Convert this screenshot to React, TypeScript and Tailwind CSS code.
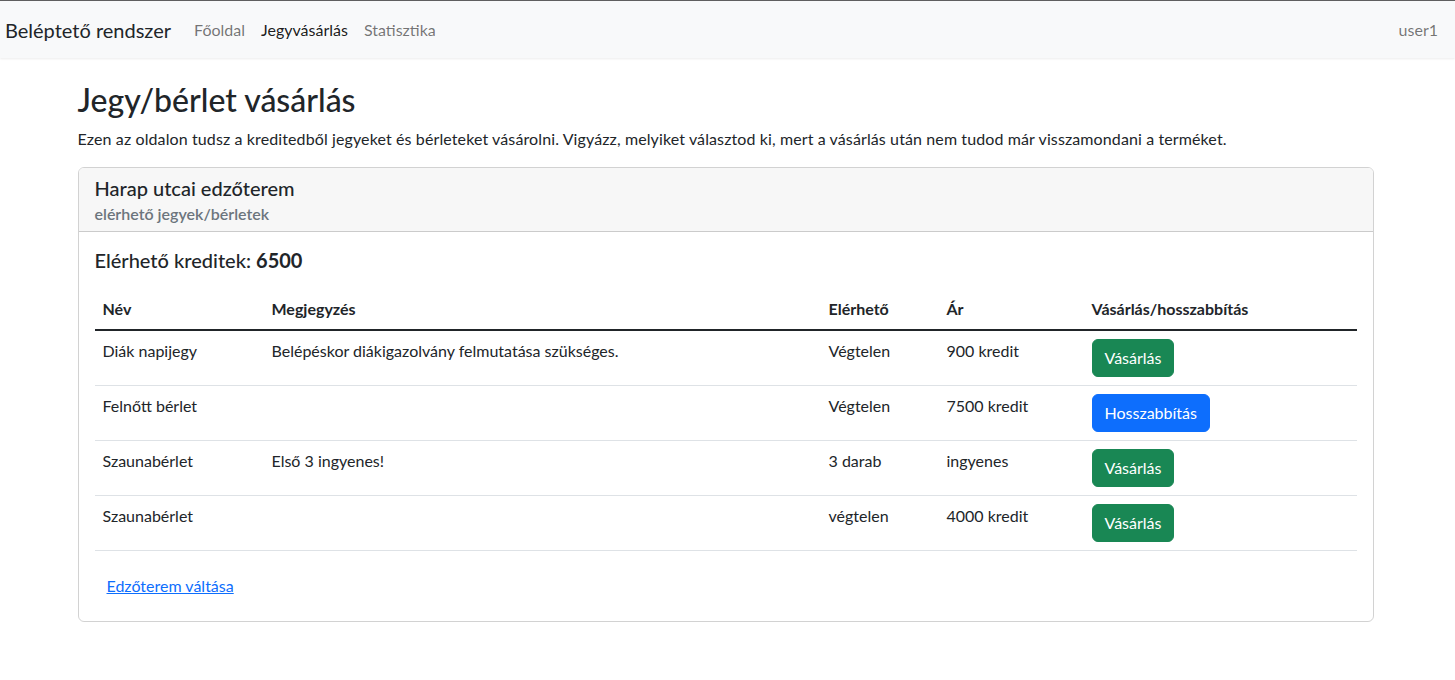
import React from "react";

const rows = [
  { name: "Diák napijegy", note: "Belépéskor diákigazolvány felmutatása szükséges.", avail: "Végtelen", price: "900 kredit", btn: "Vásárlás", kind: "green" },
  { name: "Felnőtt bérlet", note: "", avail: "Végtelen", price: "7500 kredit", btn: "Hosszabbítás", kind: "blue" },
  { name: "Szaunabérlet", note: "Első 3 ingyenes!", avail: "3 darab", price: "ingyenes", btn: "Vásárlás", kind: "green" },
  { name: "Szaunabérlet", note: "", avail: "végtelen", price: "4000 kredit", btn: "Vásárlás", kind: "green" },
];

export default function App() {
  return (
    <div className="min-h-[680px] bg-white text-[#212529] text-[16px] leading-6" style={{ fontFamily: "Lato, 'Noto Sans', sans-serif" }}>
      <nav className="h-[58px] border-t border-[#5f5f5f] bg-[#f8f9fa] shadow-[0_1px_2px_rgba(0,0,0,0.075)] flex items-center pl-[5px] pr-[17px]">
        <span className="text-[20px] leading-[30px] mr-[15px]">Beléptető rendszer</span>
        <div className="flex items-center">
          <span className="px-2 text-[rgba(0,0,0,0.55)]">Főoldal</span>
          <span className="px-2 text-[rgba(0,0,0,0.9)]">Jegyvásárlás</span>
          <span className="px-2 text-[rgba(0,0,0,0.55)]">Statisztika</span>
        </div>
        <span className="ml-auto text-[rgba(0,0,0,0.55)]">user1</span>
      </nav>

      <main className="mx-auto w-[1320px] pl-[10px] pr-[14px] pt-[23px]">
        <h2 className="text-[32px] leading-[38px] font-medium mb-2">Jegy/bérlet vásárlás</h2>
        <p className="mb-4 tracking-[0.007em]">Ezen az oldalon tudsz a kreditedből jegyeket és bérleteket vásárolni. Vigyázz, melyiket választod ki, mert a vásárlás után nem tudod már visszamondani a terméket.</p>

        <div className="border border-[rgba(0,0,0,0.175)] rounded-[6px] overflow-hidden">
          <div className="bg-[#f7f7f7] border-b border-[rgba(0,0,0,0.175)] px-4 py-2">
            <h5 className="text-[20px] leading-6 font-medium mb-1">Harap utcai edzőterem</h5>
            <h6 className="text-[16px] leading-[19px] font-semibold text-[#6c757d]">elérhető jegyek/bérletek</h6>
          </div>
          <div className="p-4">
            <h5 className="text-[20px] leading-6 font-medium mb-[17px]">
              Elérhető kreditek: <b className="font-bold">6500</b>
            </h5>
            <table className="w-full border-collapse mb-4">
              <colgroup>
                <col className="w-[169px]" />
                <col className="w-[557px]" />
                <col className="w-[118px]" />
                <col className="w-[145px]" />
                <col />
              </colgroup>
              <thead>
                <tr className="border-b-2 border-[#212529]">
                  <th className="text-left font-bold p-2 align-top">Név</th>
                  <th className="text-left font-bold p-2 align-top">Megjegyzés</th>
                  <th className="text-left font-bold p-2 align-top">Elérhető</th>
                  <th className="text-left font-bold p-2 align-top">Ár</th>
                  <th className="text-left font-bold p-2 align-top">Vásárlás/hosszabbítás</th>
                </tr>
              </thead>
              <tbody>
                {rows.map((r, i) => (
                  <tr key={i} className="border-b border-[#dee2e6]">
                    <td className="p-2 align-top">{r.name}</td>
                    <td className="p-2 align-top">{r.note}</td>
                    <td className="p-2 align-top">{r.avail}</td>
                    <td className="p-2 align-top">{r.price}</td>
                    <td className="p-2 align-top">
                      <button
                        className={
                          r.kind === "green"
                            ? "h-[38px] px-3 rounded-[6px] border border-[#198754] bg-[#198754] text-white"
                            : "h-[38px] px-3 rounded-[6px] border border-[#0d6efd] bg-[#0d6efd] text-white"
                        }
                      >
                        {r.btn}
                      </button>
                    </td>
                  </tr>
                ))}
              </tbody>
            </table>
            <button className="h-[38px] px-3 text-[#0d6efd] underline">Edzőterem váltása</button>
          </div>
        </div>
      </main>
    </div>
  );
}
